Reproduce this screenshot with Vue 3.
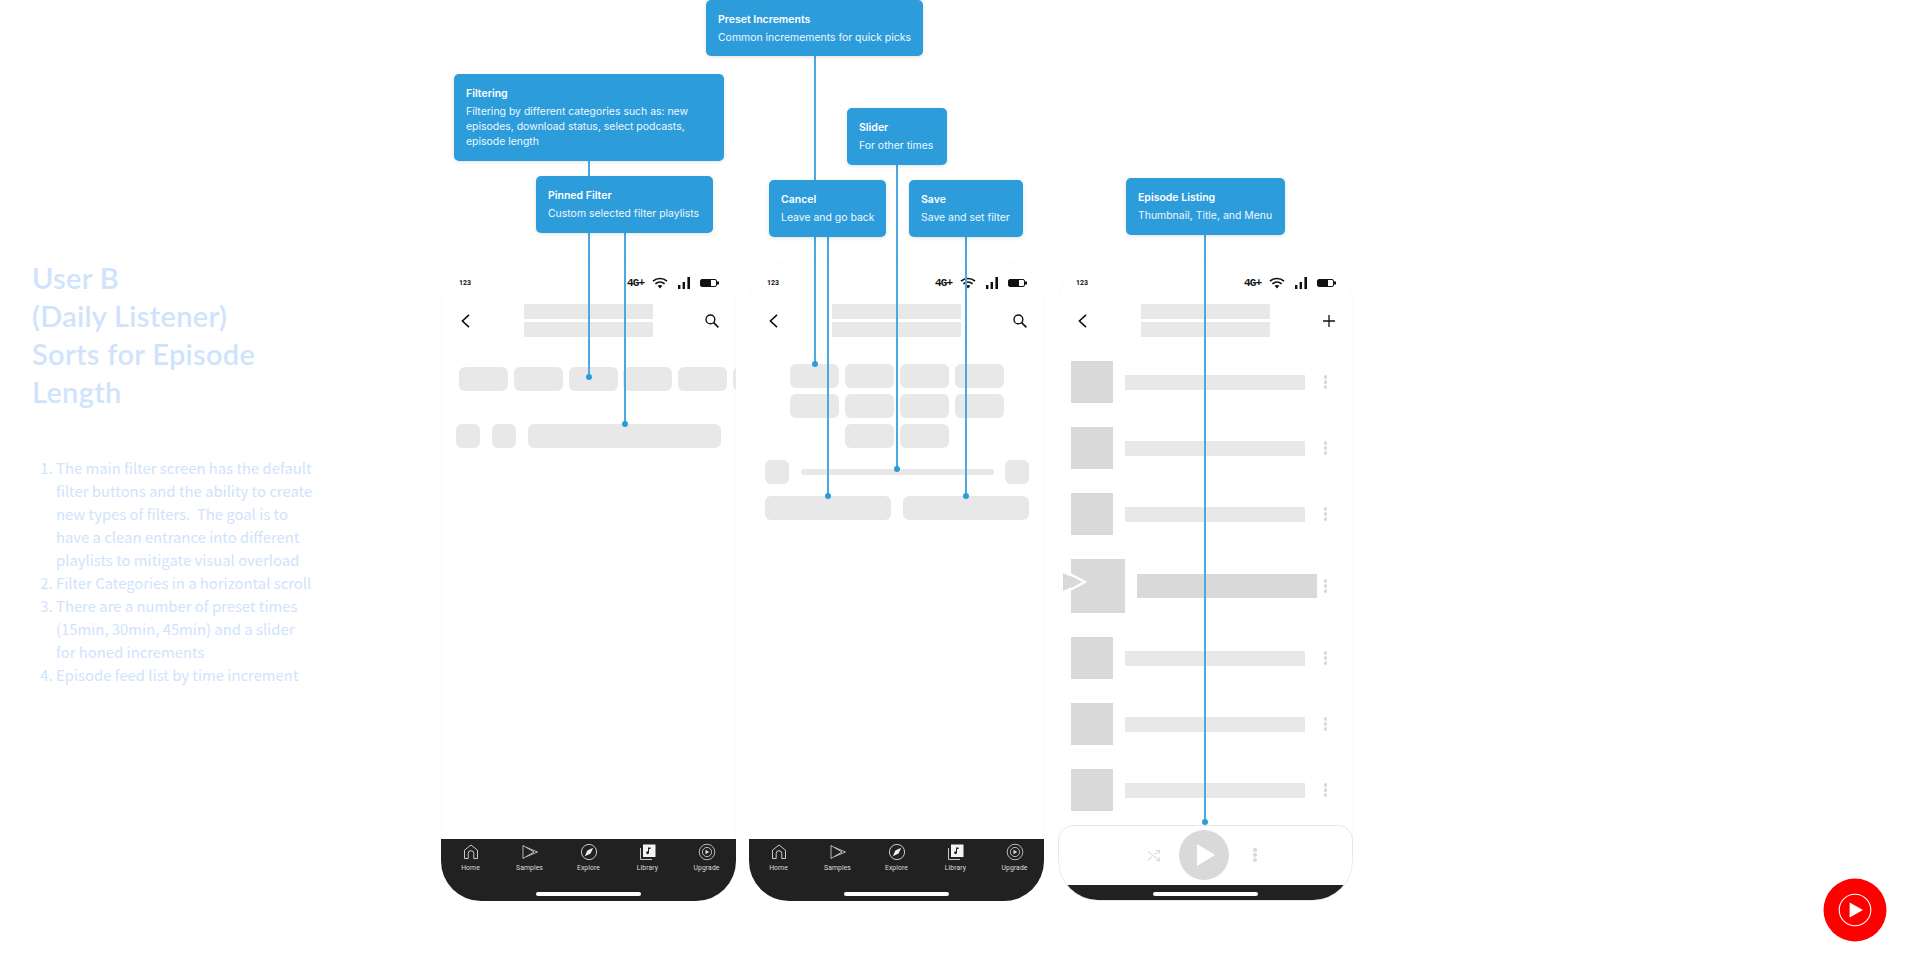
<script setup>
// callouts on the free canvas: x, y, w, h in page pixels
const callouts = [
  { title: 'Filtering', body: 'Filtering by different categories such as: new episodes, download status, select podcasts, episode length', x: 454, y: 74, w: 270, h: 87 },
  { title: 'Pinned Filter', body: 'Custom selected filter playlists', x: 536, y: 176, w: 177, h: 57 },
  { title: 'Preset Increments', body: 'Common incremements for quick picks', x: 706, y: 0, w: 217, h: 56 },
  { title: 'Slider', body: 'For other times', x: 847, y: 108, w: 100, h: 57 },
  { title: 'Cancel', body: 'Leave and go back', x: 769, y: 180, w: 117, h: 57 },
  { title: 'Save', body: 'Save and set filter', x: 909, y: 180, w: 114, h: 57 },
  { title: 'Episode Listing', body: 'Thumbnail, Title, and Menu', x: 1126, y: 178, w: 159, h: 57 },
]
// connector lines, from the box down to the dot
const lines = [
  { x: 589, y1: 161, y2: 377 },
  { x: 625, y1: 233, y2: 424 },
  { x: 815, y1: 56, y2: 364 },
  { x: 828, y1: 237, y2: 496 },
  { x: 897, y1: 165, y2: 469 },
  { x: 966, y1: 237, y2: 496 },
  { x: 1205, y1: 235, y2: 822 },
]
const navItems = ['Home', 'Samples', 'Explore', 'Library', 'Upgrade']
const episodes = [false, false, false, true, false, false, false]
</script>

<template>
  <div class="board">
    <section class="notes">
      <h1>User B<br />(Daily Listener)<br />Sorts for Episode<br />Length</h1>
      <ol>
        <li>The main filter screen has the default filter buttons and the ability to create new types of filters.&nbsp; The goal is to have a clean entrance into different playlists to mitigate visual overload</li>
        <li>Filter Categories in a horizontal scroll</li>
        <li>There are a number of preset times (15min, 30min, 45min) and a slider for honed increments</li>
        <li>Episode feed list by time increment</li>
      </ol>
    </section>

    <div class="phones">
      <!-- filter screen -->
      <div class="phone" v-for="n in 2" :key="n">
        <div class="status">
          <span class="clock">123</span>
          <span class="net">4G+</span>
          <svg class="wifi" viewBox="0 0 16 12"><path d="M1 4.2C5 .6 11 .6 15 4.2M3.4 6.8c2.7-2.3 6.5-2.3 9.2 0" fill="none" stroke="#111" stroke-width="1.7" /><path d="M5.6 8.8c1.4-1 3.4-1 4.8 0L8 11.6z" fill="#111" /></svg>
          <svg class="signal" viewBox="0 0 12 12"><path d="M0 8h2.4v4H0zM4.6 5H7v7H4.6zM9.4 0H12v12H9.4z" fill="#111" /></svg>
          <svg class="battery" viewBox="0 0 19 8"><rect x=".5" y=".5" width="16" height="7" rx="1.5" fill="#fff" stroke="#111" /><rect x="1" y="1" width="10" height="6" fill="#111" /><rect x="17" y="2.5" width="2" height="3" fill="#111" /></svg>
        </div>
        <div class="head">
          <svg class="back" viewBox="0 0 9 14"><path d="M8 .8 1.4 7 8 13.2" fill="none" stroke="#111" stroke-width="1.6" /></svg>
          <div class="titles"><i></i><i></i></div>
          <svg class="search" viewBox="0 0 14 14"><circle cx="5.4" cy="5.4" r="4.4" fill="none" stroke="#111" stroke-width="1.4" /><path d="m8.6 8.6 4.8 4.8" stroke="#111" stroke-width="1.6" /></svg>
        </div>

        <div v-if="n === 1" class="body-one">
          <div class="chips">
            <i v-for="c in 6" :key="c" class="chip"></i>
          </div>
          <div class="pinned">
            <i class="chip small"></i>
            <i class="chip small"></i>
            <i class="chip wide"></i>
          </div>
        </div>

        <div v-else class="body-two">
          <div class="presets">
            <i v-for="c in 8" :key="c" class="chip"></i>
            <i class="chip second"></i>
            <i class="chip"></i>
          </div>
          <div class="slider">
            <i class="chip small"></i>
            <i class="track"></i>
            <i class="chip small"></i>
          </div>
          <div class="actions">
            <i class="chip"></i>
            <i class="chip"></i>
          </div>
        </div>

        <nav class="tabbar">
          <div class="tabs">
            <div class="tab" v-for="item in navItems" :key="item">
              <svg viewBox="0 0 18 18">
                <path v-if="item === 'Home'" d="M2.5 15.5V7.2L9 2l6.5 5.2v8.3h-3.7v-5a2.8 2.8 0 0 0-5.6 0v5z" fill="none" stroke="#ddd" stroke-width=".9" />
                <g v-else-if="item === 'Samples'" fill="none" stroke="#ddd" stroke-width=".8">
                  <path d="M2 2.5v13L13 9z" />
                  <path d="M5.5 4.4 16.5 9 5.5 13.6" />
                </g>
                <g v-else-if="item === 'Explore'">
                  <circle cx="9" cy="9" r="7.6" fill="none" stroke="#ddd" stroke-width=".9" />
                  <path d="m13.2 4.8-2.6 5.8L4.8 13.2l2.6-5.8z" fill="#eee" />
                </g>
                <g v-else-if="item === 'Library'">
                  <path d="M1.5 5v11.5H13" fill="none" stroke="#ddd" stroke-width=".9" />
                  <rect x="4" y="1.5" width="12.5" height="12.5" fill="#f4f4f4" />
                  <path d="M10 4.5v5.2a1.4 1.4 0 1 1-1-1.3V4.5h2.6v1.6H10z" fill="#212121" />
                </g>
                <g v-else>
                  <circle cx="9" cy="9" r="7.8" fill="none" stroke="#ddd" stroke-width=".8" />
                  <circle cx="9" cy="9" r="4.6" fill="none" stroke="#ddd" stroke-width=".8" />
                  <path d="M7.5 6.8v4.4L11.2 9z" fill="#ddd" />
                </g>
              </svg>
              <span>{{ item }}</span>
            </div>
          </div>
          <i class="home-bar"></i>
        </nav>
      </div>

      <!-- episode list -->
      <div class="phone list-phone">
        <div class="status">
          <span class="clock">123</span>
          <span class="net">4G+</span>
          <svg class="wifi" viewBox="0 0 16 12"><path d="M1 4.2C5 .6 11 .6 15 4.2M3.4 6.8c2.7-2.3 6.5-2.3 9.2 0" fill="none" stroke="#111" stroke-width="1.7" /><path d="M5.6 8.8c1.4-1 3.4-1 4.8 0L8 11.6z" fill="#111" /></svg>
          <svg class="signal" viewBox="0 0 12 12"><path d="M0 8h2.4v4H0zM4.6 5H7v7H4.6zM9.4 0H12v12H9.4z" fill="#111" /></svg>
          <svg class="battery" viewBox="0 0 19 8"><rect x=".5" y=".5" width="16" height="7" rx="1.5" fill="#fff" stroke="#111" /><rect x="1" y="1" width="10" height="6" fill="#111" /><rect x="17" y="2.5" width="2" height="3" fill="#111" /></svg>
        </div>
        <div class="head">
          <svg class="back" viewBox="0 0 9 14"><path d="M8 .8 1.4 7 8 13.2" fill="none" stroke="#111" stroke-width="1.6" /></svg>
          <div class="titles"><i></i><i></i></div>
          <svg class="plus" viewBox="0 0 12 12"><path d="M6 0v12M0 6h12" stroke="#111" stroke-width="1.3" /></svg>
        </div>
        <div class="episodes">
          <div class="episode" :class="{ active: on }" v-for="(on, i) in episodes" :key="i">
            <i class="thumb"></i>
            <i class="bar"></i>
            <i class="dots"><b></b><b></b><b></b></i>
            <svg v-if="on" class="marker" viewBox="0 0 24 20"><path d="M0 1v18l19-9z" fill="#d9d9d9" /><path d="M4 .5 22 10 4 19.5" fill="none" stroke="#fff" stroke-width="2.4" /></svg>
          </div>
        </div>
        <div class="player">
          <div class="controls">
            <svg class="shuffle" viewBox="0 0 14 14"><path d="M1 2.5 13 12M1 12l4.6-3.8M8.2 5.9 13 2.2M9.6 1.6H13.4V5.2M9.6 12.6H13.4V9" fill="none" stroke="#d9d9d9" stroke-width="1.1" /></svg>
            <div class="play"><svg viewBox="0 0 18 22"><path d="M0 0v22l18-11z" fill="#fff" /></svg></div>
            <i class="dots"><b></b><b></b><b></b></i>
          </div>
          <div class="player-foot"><i class="home-bar"></i></div>
        </div>
      </div>
    </div>

    <!-- annotation layer -->
    <i
      v-for="l in lines"
      :key="l.x"
      class="line"
      :style="{ left: l.x - 1 + 'px', top: l.y1 + 'px', height: l.y2 - l.y1 + 'px' }"
    ></i>
    <div
      v-for="c in callouts"
      :key="c.title"
      class="callout"
      :style="{ left: c.x + 'px', top: c.y + 'px', width: c.w + 'px', height: c.h + 'px' }"
    >
      <strong>{{ c.title }}</strong>
      <p>{{ c.body }}</p>
    </div>

    <svg class="yt-logo" viewBox="0 0 64 64">
      <circle cx="32" cy="32" r="31.5" fill="#f00" />
      <circle cx="32" cy="32" r="15.8" fill="none" stroke="#fff" stroke-width="1.1" />
      <path d="M26.6 24.4v15.2L40 32z" fill="#fff" />
    </svg>
  </div>
</template>

<style scoped>
i {
  display: block;
}
.board {
  position: relative;
  width: 1920px;
  height: 964px;
  overflow: hidden;
  display: flex;
  background: #fff;
}

.notes {
  flex: none;
  width: 441px;
  box-sizing: border-box;
  padding: 259px 0 0 32px;
  color: #d0e3fd;
}
.notes h1 {
  margin: 0;
  font: 600 29px/38px Lato, "Noto Sans", sans-serif;
  letter-spacing: 0.3px;
  white-space: nowrap;
}
.notes ol {
  margin: 45px 0 0;
  padding: 0 0 0 24px;
  width: 257px;
  font: 400 14.85px/23px "Noto Sans CJK SC", "Noto Sans", sans-serif;
}

.phones {
  display: flex;
  gap: 13px;
  padding-top: 261px;
  height: 640px;
}
.phone {
  position: relative;
  width: 295px;
  height: 640px;
  border-radius: 40px;
  box-shadow: inset 0 0 0 1px #fbfbfb;
  overflow: hidden;
  display: flex;
  flex-direction: column;
}
.list-phone {
  margin-left: 1px;
}

.status {
  height: 12px;
  margin-top: 16px;
  padding: 0 17px 0 18px;
  display: flex;
  align-items: center;
}
.clock {
  font: 700 7px/12px Roboto, sans-serif;
  color: #111;
  margin-right: auto;
}
.net {
  font: 700 11px/12px "Liberation Mono", monospace;
  letter-spacing: -0.8px;
  color: #111;
  width: 18px;
  margin-right: 7px;
}
.wifi {
  width: 16px;
  height: 12px;
  margin-right: 10px;
}
.signal {
  width: 12px;
  height: 12px;
  margin-right: 10px;
}
.battery {
  width: 19px;
  height: 8px;
}

.head {
  margin-top: 15px;
  display: grid;
  grid-template-columns: 83px 129px 83px;
  align-items: center;
}
.back {
  width: 9px;
  height: 14px;
  margin-left: 20px;
}
.search {
  width: 14px;
  height: 14px;
  justify-self: end;
  margin-right: 17px;
}
.plus {
  width: 12px;
  height: 12px;
  justify-self: end;
  margin-right: 18px;
}
.titles {
  display: flex;
  flex-direction: column;
  gap: 3px;
}
.titles i {
  height: 15px;
  background: #e8e8e8;
}

.chip {
  flex: none;
  height: 24px;
  width: 49px;
  border-radius: 6px;
  background: #e8e8e8;
}
.chip.small {
  width: 24px;
}
.chip.wide {
  width: 193px;
}
.chips {
  display: flex;
  gap: 5.8px;
  margin: 30px 0 0 18px;
}
.pinned {
  display: flex;
  gap: 12px;
  margin: 33px 0 0 15px;
}

.presets {
  display: grid;
  grid-template-columns: repeat(4, 49px);
  gap: 6px;
  margin: 27px 0 0 41px;
}
.presets .second {
  grid-column: 2;
}
.slider {
  display: flex;
  align-items: flex-start;
  justify-content: space-between;
  margin: 12px 15px 0 16px;
}
.track {
  width: 193px;
  height: 6px;
  margin-top: 9px;
  border-radius: 3px;
  background: #e8e8e8;
}
.actions {
  display: flex;
  justify-content: space-between;
  margin: 12px 15px 0 16px;
}
.actions .chip {
  width: 126px;
}

.tabbar {
  margin-top: auto;
  height: 62px;
  background: #212121;
  box-sizing: border-box;
  padding-top: 4px;
  display: flex;
  flex-direction: column;
  align-items: center;
}
.tabs {
  width: 100%;
  display: grid;
  grid-template-columns: repeat(5, 1fr);
}
.tab {
  display: flex;
  flex-direction: column;
  align-items: center;
}
.tab svg {
  width: 18px;
  height: 18px;
}
.tab span {
  margin-top: 2px;
  font: 400 6.8px/10px Roboto, sans-serif;
  letter-spacing: 0.1px;
  color: #dedede;
}
.home-bar {
  width: 105px;
  height: 4px;
  border-radius: 2px;
  background: #fff;
}
.tabbar .home-bar {
  margin-top: 19px;
}

.episodes {
  margin-top: 24px;
  display: flex;
  flex-direction: column;
  gap: 24px;
}
.episode {
  position: relative;
  display: flex;
  align-items: center;
  padding-left: 13px;
}
.thumb {
  width: 42px;
  height: 42px;
  background: #d9d9d9;
}
.bar {
  width: 180px;
  height: 15px;
  margin-left: 12px;
  background: #e8e8e8;
}
.episode.active .thumb {
  width: 54px;
  height: 54px;
}
.episode.active .bar {
  height: 24px;
  background: #d9d9d9;
}
.episode .dots {
  margin-left: auto;
  margin-right: 26px;
}
.dots {
  display: flex;
  flex-direction: column;
  gap: 1.5px;
}
.dots b {
  display: block;
  width: 3.4px;
  height: 3.4px;
  border-radius: 50%;
  background: #d9d9d9;
}
.marker {
  position: absolute;
  left: 5px;
  top: 13px;
  width: 24px;
  height: 20px;
}

.player {
  margin-top: auto;
  height: 76px;
  box-sizing: border-box;
  border: 1px solid #e8e8e8;
  border-radius: 15px 15px 40px 40px;
  overflow: hidden;
  display: flex;
  flex-direction: column;
}
.controls {
  height: 59px;
  box-sizing: border-box;
  padding: 4px 7px 5px 0;
  display: flex;
  align-items: center;
  justify-content: center;
}
.shuffle {
  width: 13px;
  height: 13px;
}
.play {
  width: 50px;
  height: 50px;
  margin: 0 24px 0 19px;
  border-radius: 50%;
  background: #d9d9d9;
  display: flex;
  align-items: center;
  justify-content: center;
}
.play svg {
  width: 18px;
  height: 22px;
  margin-left: 4px;
}
.player-foot {
  flex: 1;
  background: #212121;
  display: flex;
  justify-content: center;
  padding-top: 7px;
}

.line {
  position: absolute;
  width: 2px;
  background: #4aa8e4;
}
.line::after {
  content: "";
  position: absolute;
  left: -2px;
  bottom: -3px;
  width: 6px;
  height: 6px;
  border-radius: 50%;
  background: #2d9cdb;
}
.callout {
  position: absolute;
  box-sizing: border-box;
  padding: 13px 6px 0 12px;
  border-radius: 5px;
  background: #2d9cdb;
  box-shadow: 0 1px 4px rgba(0, 0, 0, 0.12);
  color: #fff;
  font-family: Inter, sans-serif;
}
.callout strong {
  display: block;
  font-size: 10.5px;
  font-weight: 600;
  line-height: 14px;
}
.callout p {
  margin: 3px 0 0;
  font-size: 10.45px;
  font-weight: 400;
  line-height: 15px;
  color: #eef7fd;
}

.yt-logo {
  position: absolute;
  left: 1823px;
  top: 878px;
  width: 64px;
  height: 64px;
}
</style>

<style>
html,
body {
  margin: 0;
  background: #fff;
}
</style>
